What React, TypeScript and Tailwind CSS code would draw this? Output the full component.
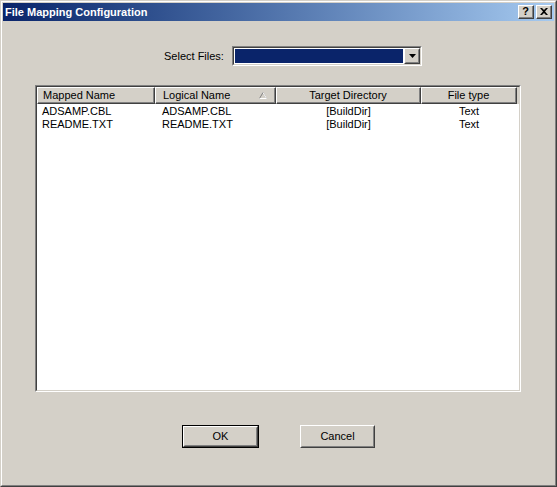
import React from "react";

// classic Win2000 3D frames, done with nested borders
const raised =
  "border border-t-white border-l-white border-r-[#404040] border-b-[#404040]";
const raisedInner =
  "border border-t-[#d4d0c8] border-l-[#d4d0c8] border-r-[#808080] border-b-[#808080]";

const columns = [
  { label: "Mapped Name", width: "w-[118px]", align: "text-left pl-[5px]", sorted: false },
  { label: "Logical Name", width: "w-[121px]", align: "text-left pl-[7px]", sorted: true },
  { label: "Target Directory", width: "w-[145px]", align: "text-center", sorted: false },
  { label: "File type", width: "w-[96px]", align: "text-center", sorted: false },
];

const rows = [
  ["ADSAMP.CBL", "ADSAMP.CBL", "[BuildDir]", "Text"],
  ["README.TXT", "README.TXT", "[BuildDir]", "Text"],
];

const TitleButton = ({ children }: { children: React.ReactNode }) => (
  <div className={`w-[16px] h-[14px] bg-[#d4d0c8] ${raised}`}>
    <div className={`w-full h-full flex items-center justify-center text-[11px] font-bold leading-none text-black border-r border-b border-r-[#808080] border-b-[#808080]`}>
      {children}
    </div>
  </div>
);

const PushButton = ({ label, isDefault }: { label: string; isDefault?: boolean }) => (
  <div className={`h-[23px] ${isDefault ? "w-[77px] border border-black" : "w-[75px]"}`}>
    <div className={`w-full h-full bg-[#d4d0c8] ${raised}`}>
      <div className={`w-full h-full flex items-center justify-center ${raisedInner}`}>
        {label}
      </div>
    </div>
  </div>
);

export default function App() {
  return (
    <div
      className="w-[557px] h-[487px] border border-t-[#d4d0c8] border-l-[#d4d0c8] border-r-[#404040] border-b-[#404040] text-[11px] text-black"
      style={{ fontFamily: '"Liberation Sans", Arial, sans-serif' }}
    >
      <div className="h-full border border-t-white border-l-white border-r-[#808080] border-b-[#808080] bg-[#d4d0c8] p-[1px] flex flex-col">
        {/* Title bar */}
        <div className="h-[18px] flex items-center bg-gradient-to-r from-[#0a246a] to-[#a6caf0] pl-[2px] pr-[2px]">
          <span className="flex-1 text-white font-bold text-[11px] leading-none">
            File Mapping Configuration
          </span>
          <TitleButton>?</TitleButton>
          <div className="w-[2px]" />
          <TitleButton>
            <svg width="8" height="7" viewBox="0 0 8 7">
              <path d="M0 0h2l2 2 2-2h2L5 3.5 8 7H6L4 5 2 7H0l3-3.5z" fill="#000" />
            </svg>
          </TitleButton>
        </div>

        {/* Select row */}
        <div className="mt-[25px] flex items-center pl-[161px]">
          <span className="w-[68px]">Select Files:</span>
          <div className="w-[190px] h-[20px] border border-t-[#808080] border-l-[#808080] border-r-white border-b-white">
            <div className="w-full h-full flex border border-t-[#404040] border-l-[#404040] border-r-[#d4d0c8] border-b-[#d4d0c8] bg-white">
              <div className="flex-1 m-[1px] bg-[#0a246a]" />
              <div className={`w-[16px] h-full bg-[#d4d0c8] ${raised}`}>
                <div className={`w-full h-full flex items-center justify-center ${raisedInner}`}>
                  <svg width="7" height="4" viewBox="0 0 7 4">
                    <path d="M0 0h7L3.5 4z" fill="#000" />
                  </svg>
                </div>
              </div>
            </div>
          </div>
        </div>

        {/* List view */}
        <div className="mt-[19px] ml-[32px] w-[486px] h-[307px] border border-t-[#808080] border-l-[#808080] border-r-white border-b-white">
          <div className="w-full h-full flex flex-col border border-t-[#404040] border-l-[#404040] border-r-[#d4d0c8] border-b-[#d4d0c8] bg-white">
            <div className="h-[17px] flex bg-[#d4d0c8] shrink-0">
              {columns.map((col) => (
                <div key={col.label} className={`${col.width} h-full ${raised}`}>
                  <div className={`relative w-full h-full flex items-center ${col.align === "text-center" ? "justify-center" : "justify-start"} ${col.align} border-r border-b border-r-[#808080] border-b-[#808080]`}>
                    {col.label}
                    {col.sorted && (
                      <svg className="absolute right-[7px] top-[4px]" width="8" height="7" viewBox="0 0 8 7">
                        <path d="M4 0.5L7.5 6.5H0.5z" fill="none" stroke="#808080" />
                        <path d="M0.5 6.5H7.5L4 0.5" fill="none" stroke="#fff" />
                      </svg>
                    )}
                  </div>
                </div>
              ))}
            </div>
            <div className="pt-[1px]">
              {rows.map((row, i) => (
                <div key={i} className="h-[13px] flex items-center leading-none">
                  <div className="w-[118px] pl-[5px]">{row[0]}</div>
                  <div className="w-[121px] pl-[7px]">{row[1]}</div>
                  <div className="w-[145px] text-center">{row[2]}</div>
                  <div className="w-[96px] text-center">{row[3]}</div>
                </div>
              ))}
            </div>
          </div>
        </div>

        {/* Buttons */}
        <div className="mt-[33px] flex pl-[179px]">
          <PushButton label="OK" isDefault />
          <div className="w-[41px]" />
          <PushButton label="Cancel" />
        </div>
      </div>
    </div>
  );
}
